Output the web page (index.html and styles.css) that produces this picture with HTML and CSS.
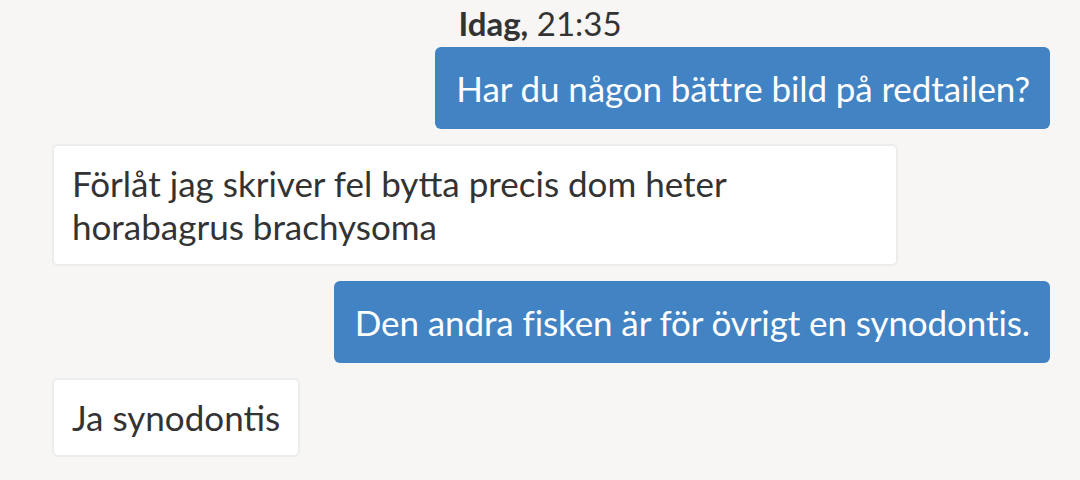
FILE: index.html
```html
<!DOCTYPE html>
<html lang="sv">
<head>
<meta charset="UTF-8">
<meta name="viewport" content="width=device-width, initial-scale=1.0">
<title>Meddelanden</title>
<link rel="stylesheet" href="styles.css">
</head>
<body>
  <div class="chat">
    <div class="day-stamp"><b>Idag,</b> 21:35</div>

    <div class="msg msg-out">Har du någon bättre bild på redtailen?</div>
    <div class="msg msg-in">Förlåt jag skriver fel bytta precis dom heter horabagrus brachysoma</div>
    <div class="msg msg-out">Den andra fisken är för övrigt en synodontis.</div>
    <div class="msg msg-in">Ja synodontis</div>
  </div>
</body>
</html>
```

FILE: styles.css
```css
body {
  margin: 0;
  padding: 0;
  background-color: #f7f6f4;
  font-family: "Lato", "Open Sans", sans-serif;
  color: #333;
}

.chat {
  display: flex;
  flex-direction: column;
  gap: 15px;
  padding: 3px 30px 0 52px;
}

/* 日付の見出し（画面幅の中央） */
.day-stamp {
  text-align: center;
  font-size: 33px;
  line-height: 40px;
  margin: 0 -30px -11px -52px;
}
.day-stamp b {
  font-weight: 700;
}

.msg {
  font-size: 35px;
  line-height: 43px;
  border-radius: 6px;
  box-sizing: border-box;
}

/* 送信したメッセージ（青） */
.msg-out {
  align-self: flex-end;
  background-color: #4283c4;
  color: #fff;
  padding: 19.5px 20px 19.5px 21px;
  letter-spacing: -0.1px;
}

/* 受信したメッセージ（白） */
.msg-in {
  align-self: flex-start;
  max-width: 846px;
  background-color: #fff;
  border: 2px solid #ececeb;
  padding: 16px 18px;
}
```
